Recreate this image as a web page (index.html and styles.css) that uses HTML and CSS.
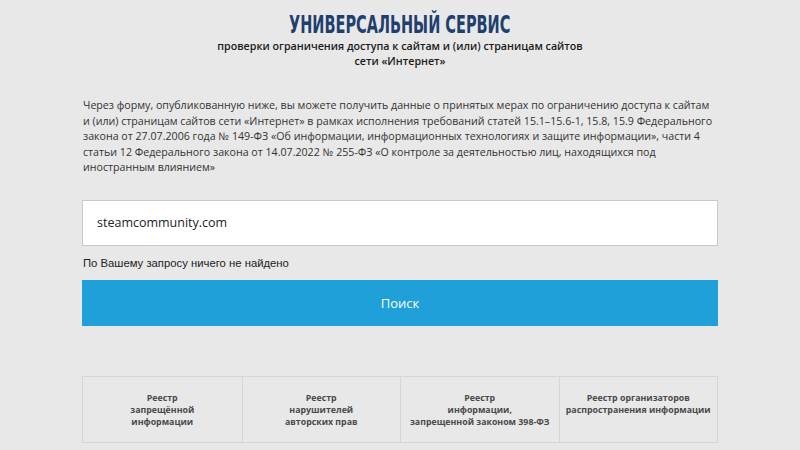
FILE: index.html
```html
<!DOCTYPE html>
<html lang="ru">
<head>
<meta charset="utf-8">
<title>Универсальный сервис</title>
<link rel="stylesheet" href="styles.css">
</head>
<body>
<div class="page">
  <header class="head">
    <h1 class="title"><span class="title-text">УНИВЕРСАЛЬНЫЙ СЕРВИС</span></h1>
    <p class="subtitle">проверки ограничения доступа к сайтам и (или) страницам сайтов<br>сети «Интернет»</p>
  </header>
  <p class="intro">Через форму, опубликованную ниже, вы можете получить данные о принятых мерах по ограничению доступа к сайтам и (или) страницам сайтов сети «Интернет» в рамках исполнения требований статей 15.1–15.6-1, 15.8, 15.9 Федерального закона от 27.07.2006 года № 149-ФЗ «Об информации, информационных технологиях и защите информации», части 4 статьи 12 Федерального закона от 14.07.2022 № 255-ФЗ «О контроле за деятельностью лиц, находящихся под иностранным влиянием»</p>
  <form class="search">
    <div class="field">steamcommunity.com</div>
    <div class="msg">По Вашему запросу ничего не найдено</div>
    <div class="btn">Поиск</div>
  </form>
  <nav class="registry">
    <div class="cell">Реестр<br>запрещённой<br>информации</div>
    <div class="cell">Реестр<br>нарушителей<br>авторских прав</div>
    <div class="cell">Реестр<br>информации,<br>запрещенной законом 398-ФЗ</div>
    <div class="cell">Реестр организаторов<br>распространения информации</div>
  </nav>
</div>
</body>
</html>
```

FILE: styles.css
```css
html, body {
  margin: 0;
  padding: 0;
  background: #e8e8e8;
}
body {
  font-family: "Open Sans", "DejaVu Sans", sans-serif;
  color: #333;
}
.page {
  width: 636px;
  margin: 0 auto;
  padding-top: 11px;
}
.head {
  text-align: center;
}
.title {
  margin: 0;
  font-family: "DejaVu Sans Condensed", "DejaVu Sans", sans-serif;
  font-weight: bold;
  font-size: 25px;
  line-height: 28px;
  color: #1f3f6e;
}
.title-text {
  display: inline-block;
  transform: scaleX(0.645);
  white-space: nowrap;
}
.subtitle {
  margin: 0;
  font-size: 10.7px;
  line-height: 15px;
  font-weight: 600;
  color: #1a1a1a;
}
.intro {
  margin: 29px 0 0;
  padding: 0 2px 0 1px;
  font-size: 10.65px;
  line-height: 15.5px;
  color: #333;
}
.search {
  margin: 24px 0 0;
}
.field {
  box-sizing: border-box;
  height: 46px;
  background: #fff;
  border: 1px solid #c9c9c9;
  padding: 0 14px;
  display: flex;
  align-items: center;
  font-family: "Open Sans", sans-serif;
  font-size: 12.5px;
  color: #222;
}
.msg {
  margin-top: 10px;
  font-family: "Liberation Sans", Arial, sans-serif;
  font-size: 11.3px;
  line-height: 14px;
  color: #222;
  padding-left: 1px;
}
.btn {
  margin-top: 10px;
  height: 46px;
  background: #1fa0d8;
  color: #fff;
  display: flex;
  align-items: center;
  justify-content: center;
  font-size: 13px;
}
.registry {
  margin-top: 50px;
  display: grid;
  grid-template-columns: repeat(4, 1fr);
  border: 1px solid #d6d6d6;
  height: 67px;
  box-sizing: border-box;
}
.cell {
  border-left: 1px solid #d6d6d6;
  text-align: center;
  font-size: 8.8px;
  line-height: 12px;
  font-weight: 700;
  color: #4a4a4a;
  padding-top: 15px;
}
.cell:first-child {
  border-left: none;
}
```
